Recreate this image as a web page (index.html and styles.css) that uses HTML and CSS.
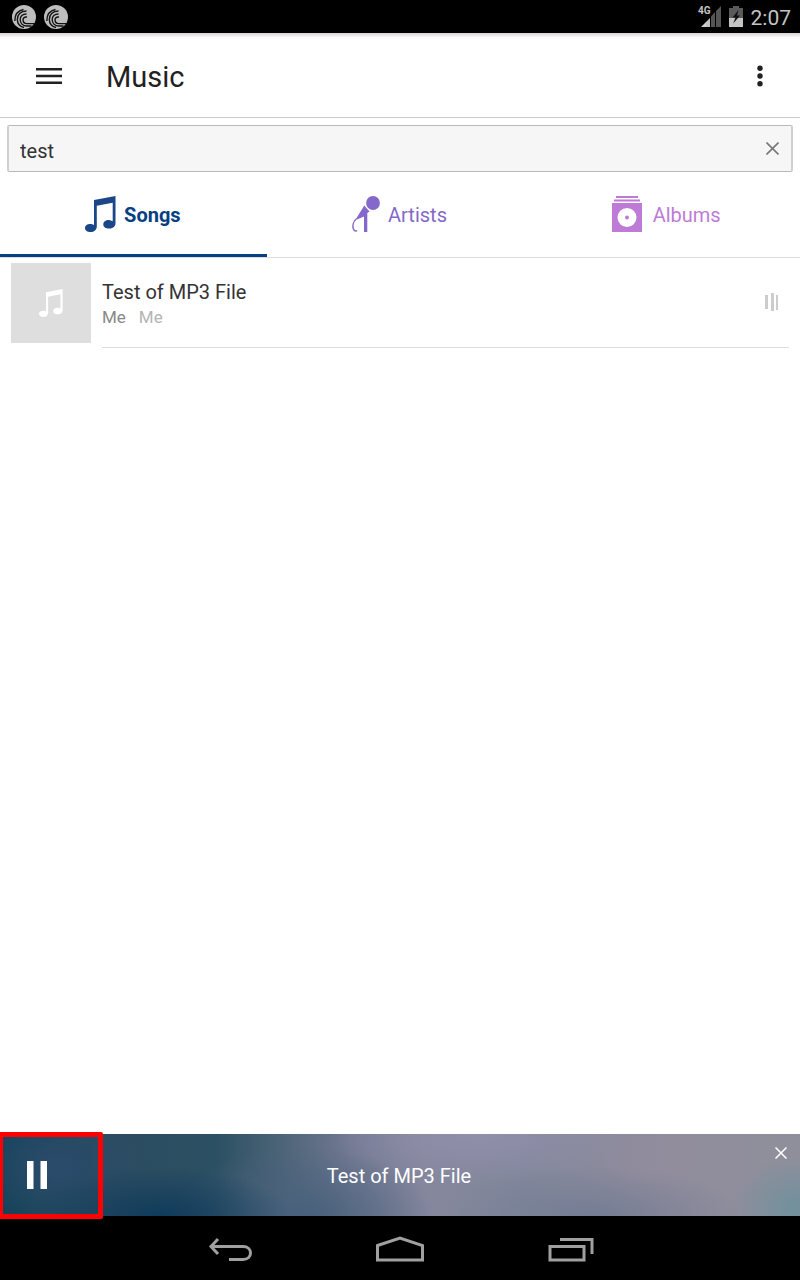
FILE: index.html
```html
<!DOCTYPE html>
<html lang="en">
<head>
<meta charset="utf-8">
<meta name="viewport" content="width=device-width, initial-scale=1">
<title>Music</title>
<link rel="stylesheet" href="styles.css">
</head>
<body>
<svg class="defs" aria-hidden="true">
  <symbol id="swirl" viewBox="0 0 24 24">
    <circle cx="12" cy="12" r="12" fill="#bdbdbd"/>
    <g fill="none" stroke="#111" stroke-width="1.4">
      <path d="M11.500 4.500C6 5.500 2.800 9.500 2.800 16"/>
      <path d="M14.500 6C8.500 6 5.300 10 5.300 14.500C5.300 18.500 8 22 12 22.500"/>
      <path d="M14.500 9C10.500 9 8.200 11.500 8.200 14.500C8.200 18.500 11 21 15 21H19.500"/>
      <path d="M15 12C12.500 11.600 11 13 11 14.800C11 17 12.500 18.600 15 18.600H22"/>
    </g>
  </symbol>
  <symbol id="note" viewBox="0 0 31 36">
    <path d="M9 4L30.500 0V27C30.500 31 27.500 32.500 24.200 32.500C20.500 32.500 18.300 31 18.300 28.500C18.300 25.500 21.500 23.600 25 24.200C26 24.400 27 24.800 27.700 25.300V6.800L11.800 9.800V30.500C11.800 34 9 36 5.700 36C2.300 36 0 34.500 0 32C0 29.200 3 27.600 6.300 28C7.500 28.200 8.400 28.600 9 29Z"/>
  </symbol>
</svg>

<div class="status">
  <svg class="swirl"><use href="#swirl"/></svg>
  <svg class="swirl"><use href="#swirl"/></svg>
  <div class="signal">
    <span class="network">4G</span>
    <svg width="20" height="21" viewBox="0 0 20 21">
      <path d="M0 21L5 16V21Z" fill="#d0d0d0"/><path d="M5 16L9 12V21H5Z" fill="#c4c4c4"/>
      <path d="M10 10.500L14 6V21H10ZM15 5L20 0V21H15Z" fill="#555"/>
    </svg>
  </div>
  <svg class="battery" width="14" height="21" viewBox="0 0 14 21">
    <path d="M4 0H10V2H14V12H0V2H4Z" fill="#5a5a5a"/><path d="M0 12H14V21H0Z" fill="#c4c4c4"/>
    <path d="M9.500 4L3.500 11.500H6.500L4.200 17.500L11 9.500H8Z" fill="#111"/>
  </svg>
  <time class="clock">2:07</time>
</div>

<header class="appbar">
  <button class="icon-button" aria-label="Open menu">
    <svg width="26" height="16" viewBox="0 0 26 16"><path d="M0 0H26V2.500H0ZM0 6.800H26V9.300H0ZM0 13.500H26V16H0Z" fill="#212121"/></svg>
  </button>
  <h1 class="title">Music</h1>
  <button class="icon-button" aria-label="More options">
    <svg width="6" height="22" viewBox="0 0 6 22" fill="#212121"><circle cx="3" cy="3.200" r="2.700"/><circle cx="3" cy="11" r="2.700"/><circle cx="3" cy="18.800" r="2.700"/></svg>
  </button>
</header>

<form class="search">
  <input class="search-input" type="text" value="test" aria-label="Search music">
  <button class="clear" type="button" aria-label="Clear search">
    <svg width="13" height="13" viewBox="0 0 13 13"><path d="M.500.500L12.500 12.500M12.500.500L.500 12.500" stroke="#777" stroke-width="1.600"/></svg>
  </button>
</form>

<nav class="tabs">
  <button class="tab songs">
    <svg width="31" height="36" fill="#1b4788"><use href="#note"/></svg>Songs
  </button>
  <button class="tab artists">
    <svg width="28" height="36" viewBox="0 0 28 36" fill="#8468cb">
      <circle cx="21" cy="7" r="6.900"/>
      <path d="M12.300 9.500L17.500 15.500L15.300 17V36H12V20.500L6 23C4 24 5 21.500 5.500 20.500Z"/>
      <path d="M6.500 21C1 25 .500 30 1.200 32.500C2 35 4 35.800 5 34.300" fill="none" stroke="#8468cb" stroke-width="1.500"/>
    </svg>Artists
  </button>
  <button class="tab albums">
    <svg width="30" height="36" viewBox="0 0 30 36" fill="#be7bd6">
      <path d="M4 0H26V2H4ZM2 3.500H28V5.500H2Z"/>
      <path fill-rule="evenodd" d="M0 7H30V36H0ZM15 12A9.500 9.500 0 1 0 15 31A9.500 9.500 0 1 0 15 12Z"/><circle cx="15" cy="21.500" r="2"/>
    </svg>Albums
  </button>
</nav>

<main class="results">
  <article class="song">
    <div class="cover"><svg width="24" height="28" fill="#fff"><use href="#note"/></svg></div>
    <div class="details">
      <div class="texts">
        <h2 class="song-title">Test of MP3 File</h2>
        <p class="credits"><span>Me</span><span class="album">Me</span></p>
      </div>
      <svg width="13" height="18" viewBox="0 0 13 18"><path d="M0 2H3V16H0ZM6 0H9V18H6ZM11 2H13V17H11Z" fill="#ccc"/></svg>
    </div>
  </article>
</main>

<footer class="player">
  <button class="pause" aria-label="Pause">
    <svg width="20" height="28" viewBox="0 0 20 28"><path d="M0 0H6.500V28H0ZM13.500 0H20V28H13.500Z" fill="#fff"/></svg>
  </button>
  <p class="now-playing">Test of MP3 File</p>
  <button class="dismiss" aria-label="Close player">
    <svg width="12" height="12" viewBox="0 0 12 12"><path d="M.500.500L11.500 11.500M11.500.500L.500 11.500" stroke="#fff" stroke-width="1.500"/></svg>
  </button>
  <div class="highlight"></div>
</footer>

<nav class="system">
  <button class="system-button" aria-label="Back">
    <svg width="48" height="28" viewBox="0 0 48 28"><path d="M13 3L6 10.500L13 18M6.500 10.500H38C48 10.500 48 23.500 38 23.500H24" /></svg>
  </button>
  <button class="system-button" aria-label="Home">
    <svg width="48" height="28" viewBox="0 0 48 28"><path d="M1.500 9.500L24 2L46.500 9.500V24H1.500Z"/></svg>
  </button>
  <button class="system-button" aria-label="Recent apps">
    <svg width="48" height="28" viewBox="0 0 48 28"><path d="M3 10.500H37V24H3ZM13 3.500H45V18"/></svg>
  </button>
</nav>
</body>
</html>
```
FILE: styles.css
```css
* { box-sizing: border-box; }

body {
  margin: 0;
  min-height: 100vh;
  display: flex;
  flex-direction: column;
  background: #fff;
  color: #333;
  font-family: Roboto, "Noto Sans", sans-serif;
  font-size: 20px;
}

h1, h2, p { margin: 0; font-weight: 400; }

button {
  padding: 0;
  border: 0;
  background: none;
  color: inherit;
  font: inherit;
  display: flex;
  align-items: center;
  justify-content: center;
}

svg { display: block; flex: none; }

.defs { position: absolute; width: 0; height: 0; }

.status {
  display: flex;
  align-items: center;
  gap: 8px;
  height: 33px;
  padding: 0 9px 0 12px;
  background: #000;
}
.swirl { width: 24px; height: 24px; }
.signal { display: flex; align-items: flex-end; margin-left: auto; position: relative; }
.network {
  position: absolute;
  top: -1px;
  right: 10px;
  color: #c4c4c4;
  font-size: 10px;
  line-height: 12px;
  font-weight: 700;
}
.clock { color: #c4c4c4; font-size: 21px; line-height: 32px; padding-top: 2px; }

.appbar {
  display: flex;
  align-items: center;
  height: 85px;
  padding: 1px 16px 0 25px;
  border-bottom: 1px solid #ccc;
  background: linear-gradient(#d8d4d4, #fff 5px);
}
.icon-button { width: 48px; height: 48px; }
.title { flex: 1; padding: 2px 0 0 33px; color: #212121; font-size: 29px; line-height: 36px; }

.search { display: flex; position: relative; padding: 7px 7px 0; }
.search-input {
  flex: 1;
  min-width: 0;
  height: 47px;
  padding: 5px 44px 0 11px;
  border: solid #b8b8b8;
  border-width: 1px 2px;
  border-color: #b8b8b8 #d2cfd0;
  border-radius: 2px;
  background: #f6f6f6;
  color: #333;
  font: inherit;
  outline: 0;
}
.clear { position: absolute; right: 8px; top: 10px; width: 40px; height: 40px; }

.tabs { display: flex; height: 86px; border-bottom: 1px solid #ddd; }
.tab { flex: 1; gap: 8px; border-bottom: 3px solid transparent; padding: 3px 1px 0 0; }
.tab svg { margin-bottom: 2px; }
.songs { border-color: #063f82; color: #063f82; font-weight: 700; }
.artists { color: #8468cb; }
.albums { gap: 11px; color: #be7bd6; }

.results { flex: 1; }
.song { display: flex; gap: 11px; padding: 5px 11px 0; }
.cover {
  display: flex;
  align-items: center;
  justify-content: center;
  width: 80px;
  height: 80px;
  background: #dedede;
}
.details {
  flex: 1;
  display: flex;
  align-items: center;
  justify-content: space-between;
  height: 85px;
  padding: 0 11px 6px 0;
  border-bottom: 1px solid #ddd;
}
.texts { padding-top: 4px; }
.song-title { font-size: 20px; line-height: 26px; }
.credits { display: flex; gap: 13px; color: #888; font-size: 17px; line-height: 24px; }
.album { color: #b4b4b4; }

.player {
  position: relative;
  display: flex;
  align-items: center;
  justify-content: center;
  height: 82px;
  color: #fff;
  background:
    radial-gradient(ellipse 130px 50px at 20% 100%, #0f3b5b, transparent),
    radial-gradient(ellipse 90px 60px at 7% 40%, #2b4b6b, transparent),
    radial-gradient(ellipse 150px 50px at 60% 0%, #918fab, transparent),
    radial-gradient(ellipse 150px 50px at 74% 100%, #747d94, transparent),
    radial-gradient(ellipse 130px 70px at 38% 100%, #48617c, transparent),
    radial-gradient(ellipse 70px 50px at 100% 90%, #70909d, transparent),
    linear-gradient(90deg, #124258, #2c4c60 13%, #2c5063 27%, #50667a 36%, #737993 44%, #85879d 53%, #81879b 66%, #918c9d 80%, #8f8f9b);
}
.pause { position: absolute; left: 0; top: 0; width: 74px; height: 82px; }
.dismiss { position: absolute; right: 0; top: 0; width: 38px; height: 38px; }
.now-playing { line-height: 26px; padding: 2px 2px 0 0; }
.highlight {
  position: absolute;
  left: -2px;
  top: -2px;
  width: 105px;
  height: 87px;
  border: 5px solid #f00;
  border-radius: 2px;
  pointer-events: none;
  z-index: 1;
}

.system {
  display: flex;
  align-items: center;
  justify-content: center;
  gap: 123px;
  height: 64px;
  padding-top: 4px;
  background: #000;
}
.system-button { width: 48px; height: 48px; }
.system-button svg { fill: none; stroke: #a0a0a0; stroke-width: 3; }
```
